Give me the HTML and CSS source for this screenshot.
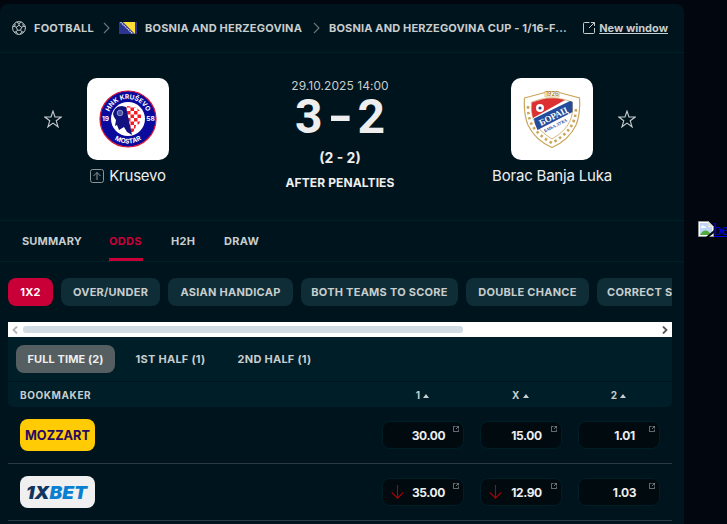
FILE: index.html
```html
<!DOCTYPE html>
<html lang="en">
<head>
    <meta charset="UTF-8" />
    <meta name="viewport" content="width=device-width, initial-scale=1.0"/>
    <title>Krusevo - Borac Banja Luka | Odds</title>
    <link rel="stylesheet" href="styles.css">
</head>
<body>
    <svg width="0" height="0" class="sprite">
        <symbol id="star" viewBox="0 0 20 20"><path d="M10 1.200l2.200 6.600h6.900l-5.500 4.200 2 6.700-5.600-4.100-5.600 4.100 2-6.700L.900 7.800h6.900z" fill="none" stroke="#c3c9cb" stroke-width="1.300"/></symbol>
        <symbol id="chevron" viewBox="0 0 7 12"><path d="M1 1l5 5-5 5" fill="none" stroke="#6b777b" stroke-width="1.1"/></symbol>
        <symbol id="external" viewBox="0 0 12 12"><path d="M6.500.5h-5a1 1 0 0 0-1 1v9a1 1 0 0 0 1 1h9a1 1 0 0 0 1-1V6M8 .5h3.500V4M11.500.5L6 6" fill="none" stroke="currentColor"/></symbol>
        <symbol id="mini-external" viewBox="0 0 7 7"><path d="M3 .5H.5v6h6V4M4 .5h2.500V3M6.500.5L3.500 3.500" fill="none" stroke="#8b9497" stroke-width=".9"/></symbol>
        <symbol id="drop" viewBox="0 0 13 14"><path d="M6.500 0v13M.7 7.300l5.800 5.900 5.800-5.900" fill="none" stroke="#b00000" stroke-width="1.100"/></symbol>
    </svg>

    <div class="page">
        <div class="detail">
            <div class="breadcrumb">
                <svg class="ball" viewBox="0 0 14 14" fill="none" stroke="#c3c9cb"><circle cx="7" cy="7" r="6.400"/><path d="M7 4.300l2.600 1.900-1 3H5.400l-1-3zM7 4.300V2.500M9.600 6.200l1.900-.7M8.600 9.200l1.200 1.600M5.400 9.200l-1.200 1.600M4.400 6.200l-1.900-.7M4.500 1.200L7 2.500l2.500-1.300M13.200 5.400l-1.700.1-.8-2.700M11.800 11.200l-2-.4-1.500 2.400M2.200 11.200l2-.4 1.500 2.400M.8 5.400l1.700.1.8-2.700"/></svg>
                <span class="crumb crumb-sport">FOOTBALL</span>
                <svg class="chevron"><use href="#chevron"/></svg>
                <svg class="flag" viewBox="0 0 18 12"><path fill="#2b3590" d="M0 0h18v12H0z"/><path fill="#fd3" d="M4 0h12v12z"/><path d="M1.500 0L14 12" stroke="#d5d7e8" stroke-width="1.200" stroke-dasharray="1.500 .6"/></svg>
                <span class="crumb crumb-country">BOSNIA AND HERZEGOVINA</span>
                <svg class="chevron"><use href="#chevron"/></svg>
                <span class="crumb crumb-league">BOSNIA AND HERZEGOVINA CUP - 1/16-F...</span>
                <a class="new-window" href="#"><svg><use href="#external"/></svg><span>New window</span></a>
            </div>

            <div class="match">
                <svg class="star"><use href="#star"/></svg>
                <div class="team">
                    <div class="team-logo">
                        <svg viewBox="0 0 58 58">
                            <defs>
                                <path id="arcTop" d="M9 29a20 20 0 0 1 40 0"/>
                                <path id="arcBottom" d="M4.500 29a24.500 24.500 0 0 0 49 0"/>
                                <pattern id="checks" width="7" height="7" patternUnits="userSpaceOnUse"><path fill="#fff" d="M0 0h7v7H0z"/><path fill="#f21d25" d="M0 0h3.500v3.500H0zM3.500 3.500H7V7H3.500z"/></pattern>
                            </defs>
                            <circle cx="29" cy="29" r="28" fill="#0a0a9c" stroke="#d8173a" stroke-width="1.200"/>
                            <circle cx="29" cy="29" r="17" fill="#fff"/>
                            <path fill="url(#checks)" d="M27 16c7 1 10 0 14 5 2 5 1 9-1 13l-3 1-1 5-4 4-3-12z"/>
                            <path fill="#11127f" d="M14 24c1-5 4-8 9-8l4 1 3 14 3 14-5-3-3-5-5 3-2-5-2 1 1-6-2-3z"/>
                            <circle cx="21" cy="23" r="2.800" fill="#4a52a8" stroke="#cdd2ee" stroke-width=".6"/>
                            <text class="crest-text"><textPath href="#arcTop" startOffset="50%">HNK KRUŠEVO</textPath></text>
                            <text class="crest-text"><textPath href="#arcBottom" startOffset="50%">MOSTAR</textPath></text>
                            <text class="crest-text" x="6.500" y="31">19</text>
                            <text class="crest-text" x="51.500" y="31">58</text>
                        </svg>
                    </div>
                    <div class="team-name">
                        <svg class="advance" viewBox="0 0 14 14" fill="none" stroke="#8a9598"><rect x=".5" y=".5" width="13" height="13" rx="2"/><path d="M7 11V3.500M3.500 7L7 3.500 10.500 7"/></svg>
                        <span class="home-name">Krusevo</span>
                    </div>
                </div>
                <div class="result">
                    <div class="date">29.10.2025 14:00</div>
                    <div class="score"><span>3</span><span class="dash">-</span><span>2</span></div>
                    <div class="penalties">(2 - 2)</div>
                    <div class="status">AFTER PENALTIES</div>
                </div>
                <div class="team">
                    <div class="team-logo">
                        <svg viewBox="0 0 58 58">
                            <path fill="#fff" stroke="#c9a65a" stroke-width="1.200" d="M1.500 8L20 3q9-2.500 18 0l18.500 5q1 16-3.500 27-7 15-24 22.500Q12 50 5 35 .5 24 1.500 8z"/>
                            <path fill="none" stroke="#c9a65a" stroke-width="2.600" stroke-dasharray="2.500 3" d="M5 16q0 14 6 22 7 9 18 15 11-6 18-15 6-8 6-22"/>
                            <path fill="#fff" stroke="#c9a65a" stroke-width=".8" d="M8.500 12q20-8 41 0 1 12-3 20-4 9-17.500 17Q16 41 12 33 7.500 24 8.500 12z"/>
                            <path fill="#dc3032" d="M9 12.500q18-7 33-2.500L10 28q-2-7-1-15.500z"/>
                            <path fill="#244b9c" d="M11 28.500L47 11l2.500 1v10L14.500 40 12 34z"/>
                            <circle cx="17" cy="18" r="4" fill="#fff"/><circle cx="17" cy="18" r="1.600" fill="#32477e"/>
                            <path fill="#fff" stroke="#c9a65a" stroke-width=".7" d="M22 1.500h14v5.500H22z"/>
                            <text class="year" x="29" y="6.300">1926</text>
                            <text class="borac" transform="translate(18 36) rotate(-27)" textLength="31" lengthAdjust="spacingAndGlyphs">БОРАЦ</text>
                            <text class="luka" transform="translate(22 42.500) rotate(-27)" textLength="25" lengthAdjust="spacingAndGlyphs">БАЊА ЛУКА</text>
                        </svg>
                    </div>
                    <div class="team-name"><span class="away-name">Borac Banja Luka</span></div>
                </div>
                <svg class="star"><use href="#star"/></svg>
            </div>

            <div class="tabs">
                <a class="tab tab-summary">SUMMARY</a>
                <a class="tab tab-odds active">ODDS</a>
                <a class="tab tab-h2h">H2H</a>
                <a class="tab tab-draw">DRAW</a>
            </div>

            <div class="odds">
                <div class="markets">
                    <a class="market m-1x2 active">1X2</a>
                    <a class="market m-ou">OVER/UNDER</a>
                    <a class="market m-ah">ASIAN HANDICAP</a>
                    <a class="market m-btts">BOTH TEAMS TO SCORE</a>
                    <a class="market m-dc">DOUBLE CHANCE</a>
                    <a class="market m-cs">CORRECT SCORE</a>
                </div>
                <div class="scrollbar">
                    <svg class="arrow" viewBox="0 0 6 8"><path d="M5 .5L1.500 4 5 7.500" fill="none" stroke="#b4b4b4" stroke-width="1.800"/></svg>
                    <div class="track"><div class="thumb"></div></div>
                    <svg class="arrow" viewBox="0 0 6 8"><path d="M1 .5L4.500 4 1 7.500" fill="none" stroke="#555" stroke-width="1.800"/></svg>
                </div>
                <div class="periods">
                    <a class="period p-full active">FULL TIME (2)</a>
                    <a class="period p-first">1ST HALF (1)</a>
                    <a class="period p-second">2ND HALF (1)</a>
                </div>
                <div class="row table-head">
                    <span class="bookmaker">BOOKMAKER</span>
                    <span class="col">1 <i></i></span>
                    <span class="col">X <i></i></span>
                    <span class="col">2 <i></i></span>
                </div>
                <div class="row">
                    <div class="bookmaker"><svg class="brand mozzart" viewBox="0 0 75 32"><text x="5" y="21" textLength="65" lengthAdjust="spacingAndGlyphs">MOZZART</text></svg></div>
                    <a class="odd">30.00<svg class="ext"><use href="#mini-external"/></svg></a>
                    <a class="odd">15.00<svg class="ext"><use href="#mini-external"/></svg></a>
                    <a class="odd">1.01<svg class="ext"><use href="#mini-external"/></svg></a>
                </div>
                <div class="row">
                    <div class="bookmaker"><svg class="brand xbet" viewBox="0 0 75 32"><text x="6" y="22.500" textLength="61" lengthAdjust="spacingAndGlyphs">1X<tspan>BET</tspan></text></svg></div>
                    <a class="odd"><svg class="drop"><use href="#drop"/></svg>35.00<svg class="ext"><use href="#mini-external"/></svg></a>
                    <a class="odd"><svg class="drop"><use href="#drop"/></svg>12.90<svg class="ext"><use href="#mini-external"/></svg></a>
                    <a class="odd">1.03<svg class="ext"><use href="#mini-external"/></svg></a>
                </div>
            </div>
        </div>

        <a class="banner" href="#"><svg viewBox="0 0 16 16"><path fill="#fff" stroke="#999" d="M.5.5h10l5 5v10H.5z"/><path fill="#bfd7f7" d="M2 2h8v4h4v8H2z"/><path fill="#fff" d="M3 6q1-3 3-1 2 0 2 2H3z"/><path fill="#51a83c" d="M2 14q4-7 9-3l2 3z"/><path fill="#02060e" d="M16 9v3l-5 4H8z"/><path fill="#ddd" d="M10 .5l5 5h-5z"/></svg>bet365</a>
    </div>
</body>
</html>
```
FILE: styles.css
```css
body {
    margin: 0;
    background-color: #02060e;
    color: #c8cdcd;
    font-family: Inter, "Liberation Sans", sans-serif;
    height: 524px;
    overflow: hidden;
}
.sprite {
    position: absolute;
}
.page {
    display: flex;
    align-items: flex-start;
    padding-top: 4px;
    white-space: nowrap;
}
.detail {
    width: 684px;
    height: 520px;
    flex: none;
    background-color: #00141e;
    border-radius: 8px 8px 0 0;
    overflow: hidden;
}

/* breadcrumb */
.breadcrumb {
    display: flex;
    align-items: center;
    height: 48px;
    padding: 0 16px 0 12px;
    border-bottom: 1px solid #001e28;
    font-size: 11px;
    font-weight: 700;
}
.ball {
    width: 14px;
    height: 14px;
    margin-right: 8px;
}
.crumb {
    letter-spacing: .2px;
}
.crumb-sport {
    width: 69px;
}
.crumb-country {
    width: 168px;
}
.crumb-league {
    flex: 1;
    letter-spacing: .15px;
}
.chevron {
    width: 7px;
    height: 12px;
    margin-right: 9px;
}
.flag {
    width: 18px;
    height: 12px;
    margin-right: 8px;
}
.new-window {
    display: flex;
    align-items: center;
    gap: 4px;
    color: #c8cdcd;
}
.new-window svg {
    width: 12px;
    height: 12px;
}

/* match header */
.match {
    display: flex;
    height: 142px;
    padding: 25px 48px 0 44px;
}
.star {
    width: 18px;
    height: 18px;
    margin-top: 32px;
    flex: none;
}
.team {
    width: 132px;
    display: flex;
    flex-direction: column;
    align-items: center;
}
.team-logo {
    width: 82px;
    height: 82px;
    display: flex;
    align-items: center;
    justify-content: center;
    background: #fff;
    border-radius: 10px;
}
.team-logo svg {
    width: 58px;
    height: 58px;
}
.crest-text {
    fill: #fff;
    font-size: 6.5px;
    font-weight: 700;
    text-anchor: middle;
}
.year {
    fill: #b08c3c;
    font-size: 5.5px;
    font-weight: 700;
    text-anchor: middle;
}
.borac {
    fill: #fff;
    font: bold 9px "Liberation Serif", serif;
}
.luka {
    fill: #244b9c;
    font: bold 4.5px "Liberation Serif", serif;
}
.team-name {
    display: flex;
    align-items: center;
    gap: 5px;
    margin-top: 6px;
    font-size: 15px;
    line-height: 20px;
    letter-spacing: -.2px;
    color: #eee;
}
.advance {
    width: 14px;
    height: 14px;
}
.result {
    flex: 1;
    display: flex;
    flex-direction: column;
    align-items: center;
}
.date {
    font-size: 12px;
    line-height: 15px;
    letter-spacing: .05px;
}
.score {
    display: flex;
    gap: 8px;
    margin-top: 1px;
    height: 46px;
    line-height: 46px;
    font-family: Roboto, sans-serif;
    font-size: 48px;
    font-weight: 700;
    color: #eee;
}
.dash {
    transform: scaleX(1.4);
}
.penalties {
    margin-top: 9px;
    font-size: 14px;
    line-height: 18px;
    font-weight: 700;
    color: #eee;
}
.status {
    margin-top: 9px;
    font-size: 12px;
    line-height: 14px;
    font-weight: 700;
    letter-spacing: .1px;
    color: #eee;
}

/* tabs */
.tabs {
    display: flex;
    height: 40px;
    padding-left: 22px;
    border-top: 1px solid #001e28;
    border-bottom: 1px solid #001e28;
    font-size: 11px;
    line-height: 40px;
    font-weight: 700;
    letter-spacing: .3px;
}
.tab-summary {
    width: 60px;
    margin-right: 27px;
    letter-spacing: .15px;
}
.tab-odds {
    width: 34px;
    margin-right: 28px;
}
.tab-h2h {
    width: 25px;
    margin-right: 28px;
}
.tab.active {
    color: #c80037;
    box-shadow: inset 0 -3px #c80037;
}

/* odds */
.odds {
    width: 664px;
    margin: 16px 12px 0 8px;
}
.markets {
    display: flex;
    gap: 8px;
    overflow: hidden;
    padding-bottom: 16px;
}
.market,
.period {
    flex: none;
    height: 28px;
    line-height: 28px;
    border-radius: 8px;
    font-size: 11px;
    font-weight: 700;
    letter-spacing: .25px;
    text-align: center;
}
.market {
    background: #0f2d37;
}
.market.active {
    background: #c80037;
    color: #fff;
}
.m-1x2 { width: 45px; }
.m-ou { width: 99px; }
.m-ah { width: 125px; }
.m-btts { width: 157px; }
.m-dc { width: 123px; }
.m-cs { width: 117px; }
.scrollbar {
    display: flex;
    align-items: center;
    height: 15px;
    padding: 0 4px;
    background: #fff;
}
.arrow {
    width: 6px;
    height: 8px;
}
.track {
    flex: 1;
    padding: 0 5px;
}
.thumb {
    width: 440px;
    height: 7px;
    border-radius: 3px;
    background: #d0dbe4;
}
.periods {
    display: flex;
    gap: 9px;
    padding: 8px;
    background: #001e28;
}
.period.active {
    background: #555e61;
    color: #eee;
    letter-spacing: .1px;
}
.p-full { width: 99px; }
.p-first { width: 93px; }
.p-second { width: 97px; }
.row {
    display: grid;
    grid-template-columns: 1fr 82px 82px 82px;
    column-gap: 16px;
    align-items: center;
    height: 56px;
    padding: 0 12px;
    border-bottom: 1px solid #2c3b41;
}
.table-head {
    height: 25px;
    border-top: 1px solid #00141e;
    border-bottom: 0;
    border-radius: 0 0 5px 5px;
    background: #001e28;
    font-size: 10px;
    font-weight: 700;
}
.table-head .bookmaker {
    letter-spacing: .6px;
}
.col {
    text-align: center;
    padding-right: 1px;
}
.col i {
    display: inline-block;
    margin: 0 0 1px 1px;
    border: solid transparent;
    border-width: 0 3px 4px;
    border-bottom-color: #c8cdcd;
}
.brand {
    display: block;
    width: 75px;
    height: 32px;
    border-radius: 8px;
}
.mozzart {
    background: #ffcb05;
    fill: #270a63;
    font-size: 13.5px;
    font-weight: 700;
}
.xbet {
    background: #f0f0f0;
    fill: #12355f;
    font-size: 17px;
    font-style: italic;
    font-weight: 900;
}
.xbet tspan {
    fill: #087fd0;
}
.odd {
    position: relative;
    box-sizing: border-box;
    height: 28px;
    line-height: 27px;
    padding-left: 11px;
    border: 1px solid #001e28;
    border-radius: 8px;
    background: #010a0f;
    color: #eee;
    font-size: 12px;
    font-weight: 700;
    letter-spacing: -.35px;
    text-align: center;
}
.ext {
    position: absolute;
    top: 4px;
    right: 4px;
    width: 6px;
    height: 6px;
}
.drop {
    position: absolute;
    top: 6px;
    left: 8px;
    width: 13px;
    height: 14px;
}

/* side banner */
.banner {
    display: flex;
    margin: 217px 0 0 14px;
    font: 16px/18px "Liberation Serif", serif;
    color: #0000ee;
}
.banner svg {
    width: 16px;
    height: 16px;
    flex: none;
}
```
